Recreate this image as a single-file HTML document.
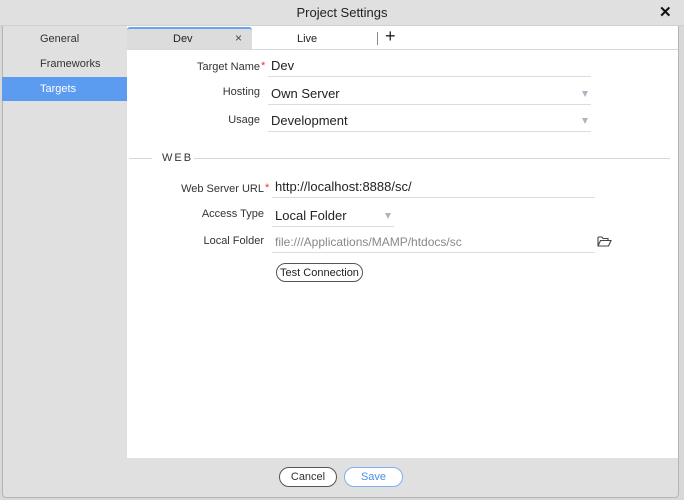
<!DOCTYPE html>
<html><head><meta charset="utf-8"><style>
*{box-sizing:border-box;margin:0;padding:0}
body{width:684px;height:500px;background:#d8d8d8;font-family:"Liberation Sans",sans-serif;position:relative;overflow:hidden}
.a{position:absolute}
.dlg{left:2px;top:0;width:677px;height:498px;background:#e0e0e0;border:1px solid #b5b5b5;border-top:none;border-radius:0 0 4px 4px}
.lbl{font-size:11px;color:#333;text-align:right;width:140px}
.val{font-size:13px;color:#222;border-bottom:1px solid #dcdcdc;height:22px;padding-top:3px;padding-left:3px}
.arr{position:absolute;right:3px;top:8px;width:0;height:0;border-left:3.5px solid transparent;border-right:3.5px solid transparent;border-top:6px solid #b0b4c0}
.btn{border:1px solid #555;border-radius:10px;font-size:11px;text-align:center;background:#fff}
</style></head><body>
<div class="a dlg"></div>
<div class="a" style="left:0;top:0;width:684px;height:26px;background:#e0e0e0;border-bottom:1px solid #d0d0d0"></div>
<div class="a" style="left:0;top:5px;width:684px;text-align:center;font-size:13px;color:#222">Project Settings</div>
<div class="a" style="left:659px;top:3px;font-size:15px;font-weight:bold;color:#111">✕</div>
<div class="a" style="left:40px;top:33px;font-size:11px;color:#333">General</div>
<div class="a" style="left:40px;top:58px;font-size:11px;color:#333">Frameworks</div>
<div class="a" style="left:2px;top:77px;width:125px;height:24px;background:#5b9bf0"></div>
<div class="a" style="left:40px;top:83px;font-size:11px;color:#fff">Targets</div>
<div class="a" style="left:127px;top:26px;width:551px;height:432px;background:#fff"></div>
<div class="a" style="left:127px;top:27px;width:125px;height:22px;background:#dcdcdc;border-top:2px solid #6aa3ee;border-radius:3px 3px 0 0"></div>
<div class="a" style="left:173px;top:33px;font-size:11px;color:#222">Dev</div>
<div class="a" style="left:235px;top:31px;font-size:12px;color:#444">×</div>
<div class="a" style="left:297px;top:33px;font-size:11px;color:#222">Live</div>
<div class="a" style="left:377px;top:32px;width:1px;height:13px;background:#888"></div>
<div class="a" style="left:385px;top:26px;font-size:18px;color:#222">+</div>
<div class="a" style="left:127px;top:49px;width:551px;height:1px;background:#d8d8d8"></div>

<div class="a lbl" style="left:120px;top:61px">Target Name</div>
<div class="a" style="left:261px;top:60px;color:#e33;font-size:11px">*</div>
<div class="a val" style="left:268px;top:55px;width:323px">Dev</div>
<div class="a lbl" style="left:120px;top:86px">Hosting</div>
<div class="a val" style="left:268px;top:83px;width:323px">Own Server<span class="arr"></span></div>
<div class="a lbl" style="left:120px;top:114px">Usage</div>
<div class="a val" style="left:268px;top:110px;width:323px">Development<span class="arr"></span></div>

<div class="a" style="left:129px;top:158px;width:23px;height:1px;background:#d8d8d8"></div>
<div class="a" style="left:162px;top:152px;font-size:11px;letter-spacing:2px;color:#333">WEB</div>
<div class="a" style="left:194px;top:158px;width:476px;height:1px;background:#d8d8d8"></div>

<div class="a lbl" style="left:124px;top:183px">Web Server URL</div>
<div class="a" style="left:265px;top:182px;color:#e33;font-size:11px">*</div>
<div class="a val" style="left:272px;top:176px;width:323px">http://localhost:8888/sc/</div>
<div class="a lbl" style="left:124px;top:208px">Access Type</div>
<div class="a val" style="left:272px;top:205px;width:122px">Local Folder<span class="arr"></span></div>
<div class="a lbl" style="left:124px;top:235px">Local Folder</div>
<div class="a val" style="left:272px;top:231px;width:323px;color:#888;font-size:12px;padding-top:4px">file:///Applications/MAMP/htdocs/sc</div>
<svg class="a" style="left:597px;top:236px" width="15" height="11" viewBox="0 0 15 11"><path d="M1 1h4l1 1.5h5v2M1 1v9h10.5l2.5-5.5H3.5L1 10" fill="none" stroke="#444" stroke-width="1.1"/></svg>
<div class="a btn" style="left:276px;top:263px;width:87px;height:19px;padding-top:3px;color:#222">Test Connection</div>

<div class="a btn" style="left:279px;top:467px;width:58px;height:20px;padding-top:3px;color:#333">Cancel</div>
<div class="a btn" style="left:344px;top:467px;width:59px;height:20px;padding-top:3px;color:#4a8ff0;border-color:#7eb0f3">Save</div>
</body></html>
